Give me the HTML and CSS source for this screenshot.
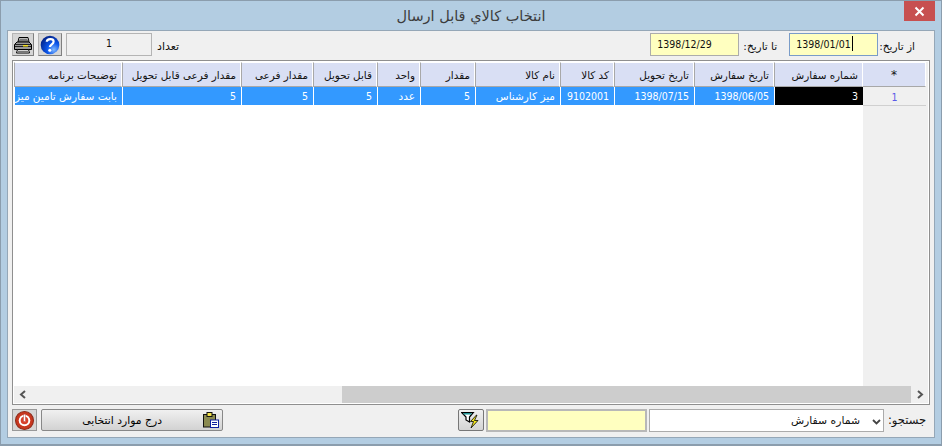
FILE: index.html
```html
<!DOCTYPE html>
<html lang="fa">
<head>
<meta charset="utf-8">
<title>انتخاب كالاي قابل ارسال</title>
<link rel="stylesheet" href="styles.css">
</head>
<body>
<div class="window">
  <header class="titlebar">
    <h1 class="title">انتخاب كالاي قابل ارسال</h1>
    <button class="close" aria-label="close"><svg width="11" height="11" viewBox="0 0 11 11"><path d="M1.500 1.500l8 8M9.500 1.500l-8 8" stroke="#fff" stroke-width="2" fill="none"/></svg></button>
  </header>
  <main class="client">
    <div class="toolbar">
      <div class="group">
        <label class="lbl">از تاریخ:</label>
        <div class="date focus">1398/01/01<span class="caret"></span></div>
        <label class="lbl to">تا تاریخ:</label>
        <div class="date second">1398/12/29</div>
      </div>
      <div class="group left">
        <span class="lbl count-lbl">تعداد</span>
        <div class="count">1</div>
        <button class="icon-btn help"><svg width="20" height="20" viewBox="0 0 20 20"><defs><radialGradient id="g" cx="70%" cy="75%" r="80%"><stop offset="0" stop-color="#7fb8ff"/><stop offset=".45" stop-color="#0b55ea"/><stop offset="1" stop-color="#04248a"/></radialGradient></defs><circle cx="10" cy="10" r="9.300" fill="url(#g)"/><path d="M6.800 6.800c.2-3.200 6.600-3.600 6.800-.3.100 2.700-3.600 2.900-3.700 5.500" fill="none" stroke="#fff" stroke-width="2.200"/><circle cx="9.800" cy="15.200" r="1.500" fill="#fff"/></svg></button>
        <button class="icon-btn printer"><svg width="18" height="18" viewBox="0 0 18 18"><path d="M5 1.500h9l1 4.500H4z" fill="#eee" stroke="#000"/><path d="M5.500 3.200h8M5 4.800h9.500" stroke="#444"/><path d="M.5 8.500l2.500-2.500h12l2.500 2.500v5H.5z" fill="#999" stroke="#000"/><path d="M1 8.500h16M1 10.500h16" stroke="#222"/><rect x="9" y="9" width="5" height="1.500" fill="#f4e021"/><path d="M3.500 13.500h11l1 3.500H2.500z" fill="#f4f4f4" stroke="#000"/><path d="M4 15.300h10" stroke="#555"/></svg></button>
      </div>
    </div>

    <section class="grid">
      <div class="grid-body">
        <div class="rownum-col">
          <div class="hcell star">*</div>
          <div class="numcell">1</div>
        </div>
        <div class="cols">
          <div class="hrow">
            <div class="hcell c1">شماره سفارش</div>
            <div class="hcell c2">تاریخ سفارش</div>
            <div class="hcell c3">تاریخ تحویل</div>
            <div class="hcell c4">کد کالا</div>
            <div class="hcell c5">نام کالا</div>
            <div class="hcell c6">مقدار</div>
            <div class="hcell c7">واحد</div>
            <div class="hcell c8">قابل تحویل</div>
            <div class="hcell c9">مقدار فرعی</div>
            <div class="hcell c10">مقدار فرعی قابل تحویل</div>
            <div class="hcell c11">توضیحات برنامه</div>
          </div>
          <div class="drow">
            <div class="dcell c1 current">3</div>
            <div class="dcell c2">1398/06/05</div>
            <div class="dcell c3">1398/07/15</div>
            <div class="dcell c4">9102001</div>
            <div class="dcell c5 ar">میز کارشناس</div>
            <div class="dcell c6">5</div>
            <div class="dcell c7 ar">عدد</div>
            <div class="dcell c8">5</div>
            <div class="dcell c9">5</div>
            <div class="dcell c10">5</div>
            <div class="dcell c11 ar">بابت سفارش تامین میز</div>
          </div>
        </div>
      </div>
      <div class="scrollbar">
        <span class="arrow"><svg width="8" height="9" viewBox="0 0 8 9"><path d="M6 1L2 4.500 6 8" fill="none" stroke="#555" stroke-width="2"/></svg></span>
        <div class="track"></div>
        <div class="thumb"></div>
        <span class="arrow"><svg width="8" height="9" viewBox="0 0 8 9"><path d="M2 1l4 3.500L2 8" fill="none" stroke="#555" stroke-width="2"/></svg></span>
      </div>
    </section>

    <div class="footer">
      <div class="group">
        <label class="lbl search-lbl">جستجو:</label>
        <div class="select"><svg class="chev" width="9" height="6" viewBox="0 0 9 6"><path d="M1 1l3.500 3.500L8 1" fill="none" stroke="#444" stroke-width="1.800"/></svg><span class="select-text">شماره سفارش</span></div>
        <div class="search"></div>
        <button class="filter"><svg width="20" height="18" viewBox="0 0 20 18"><path d="M.7 1.500h11.600L8.500 6v5L5 9V6z" fill="#fff" stroke="#000" stroke-width="1.200"/><path d="M2.500 2.800h8" stroke="#0a8a8a" stroke-width="1.400"/><path d="M15.500 4L9.500 10.500h3L10 17l7-7.500h-3.500l2.500-5.500z" fill="#f7ea1e" stroke="#000" stroke-width=".8"/></svg></button>
      </div>
      <div class="group left">
        <button class="insert">
          <svg class="clip" width="16" height="16" viewBox="0 0 16 16"><rect x=".5" y="2.500" width="12" height="12.500" fill="#8a8a50" stroke="#111"/><rect x="4" y=".5" width="5" height="4" fill="#f2e24a" stroke="#111"/><rect x="7.500" y="8" width="8" height="7.500" fill="#fff" stroke="#1020a0"/><path d="M9 10.500h5M9 12.500h5" stroke="#1020a0"/></svg>
          <span class="insert-text">درج موارد انتخابی</span>
        </button>
        <button class="power"><svg width="19" height="19" viewBox="0 0 18 18"><circle cx="9" cy="9" r="8.500" fill="#c8371f" stroke="#8d2a1a"/><circle cx="9" cy="9" r="5.500" fill="#fff"/><circle cx="9" cy="9" r="3.600" fill="#d8402a"/><rect x="8" y="3" width="2" height="7" fill="#fff" stroke="#a33" stroke-width=".4"/></svg></button>
      </div>
    </div>
  </main>
</div>
</body>
</html>
```
FILE: styles.css
```css
* { box-sizing: border-box; }
html, body { margin: 0; padding: 0; }
body { width: 942px; height: 446px; overflow: hidden; font-family: "DejaVu Sans", sans-serif; font-size: 10px; color: #111; }
button { padding: 0; font: inherit; }

.window { width: 942px; height: 446px; background: #b3cde2; border: 1px solid #8b9dad; border-bottom-width: 2px; display: flex; flex-direction: column; }
.titlebar { height: 29px; flex: none; display: flex; justify-content: center; position: relative; }
.title { margin: 5px 0 0; font-size: 14.500px; font-weight: normal; color: #3c3c3c; line-height: 20px; direction: rtl; }
.close { position: absolute; right: 6px; top: 0; width: 31px; height: 20px; background: #c75050; border: 0; display: flex; align-items: center; justify-content: center; }

.client { flex: 1; margin: 0 6px 6px; background: #f0f0f0; border: 1px solid #95a7b7; display: flex; flex-direction: column; }
.toolbar { height: 29px; flex: none; display: flex; flex-direction: row-reverse; justify-content: space-between; }
.group { display: flex; direction: rtl; align-items: flex-start; }
.lbl { font-size: 10.500px; white-space: nowrap; }

.toolbar .group:first-child { margin: 2px 19px 0 0; }
.toolbar .lbl { line-height: 24px; margin-top: 1px; }
.date { width: 89px; height: 23px; margin-right: 1px; background: #ffffc0; border: 1px solid #acacac; font-family: "DejaVu Sans Condensed", "DejaVu Sans", sans-serif; font-size: 10.500px; line-height: 20px; padding-left: 6px; direction: ltr; text-align: left; display: flex; }
.date.second { margin-right: 4px; }
.date.focus { border-color: #7a9cc8; }
.caret { width: 1px; height: 15px; margin: 2px 0 0 1px; background: #000; }
.lbl.to { margin-right: 12px; }

.toolbar .group.left { margin: 2px 0 0 4px; }
.toolbar .count-lbl { margin-top: 2px; font-size: 11px; }
.count { width: 86px; height: 23px; margin: 0 5px 0 4px; border: 1px solid #b4b4b4; background: #f0f0f0; font-family: "DejaVu Sans Condensed", "DejaVu Sans", sans-serif; font-size: 10.500px; line-height: 19px; text-align: center; }
.icon-btn { height: 23px; background: #d6d6d6; border: 1px solid; border-color: #b5b5b5 #808080 #808080 #b5b5b5; display: flex; align-items: center; justify-content: center; }
.help { width: 24px; margin-left: 4px; }
.printer { width: 22px; }

.grid { flex: 1; min-height: 0; margin: 0 4px 0 4px; border: 1px solid #8f8f8f; padding: 1px; background: #fff; display: flex; flex-direction: column; }
.grid-body { flex: 1; min-height: 0; display: flex; flex-direction: row-reverse; justify-content: flex-start; overflow: hidden; }
.rownum-col { width: 65px; flex: none; background: #f0f0f0; }
.cols { flex: 1; min-width: 0; overflow: hidden; direction: rtl; }
.hrow, .drow { display: flex; }
.hcell { height: 25px; background: #d9dff4; border-left: 1px solid #a8a8a8; border-bottom: 1px solid #a8a8a8; border-right: 1px solid #fff; border-top: 1px solid #fff; padding: 5px 4px 0 2px; font-size: 10.400px; text-align: right; white-space: nowrap; direction: rtl; overflow: hidden; line-height: 15px; flex: none; }
.star { width: 63px; text-align: center; font-size: 12px; border-left: 0; padding: 5px 0 0; }
.numcell { width: 63px; height: 19px; border-bottom: 1px solid #d0d0d0; text-align: center; line-height: 20px; color: #5a5ae8; font-family: "DejaVu Sans Condensed", "DejaVu Sans", sans-serif; font-size: 10.500px; }
.dcell { height: 19px; background: #3399ff; color: #fff; border-left: 1px solid #fff; padding: 0 5px 0 0; font-family: "DejaVu Sans Condensed", "DejaVu Sans", sans-serif; font-size: 10.500px; line-height: 18px; white-space: nowrap; overflow: hidden; text-align: right; direction: rtl; flex: none; border-bottom: 1px solid #fff; }
.dcell.ar { font-family: "DejaVu Sans", sans-serif; }
.dcell.current { background: #000; }
.c1 { width: 89px; }
.c2 { width: 80px; }
.c3 { width: 80px; }
.c4 { width: 54px; }
.c5 { width: 85px; }
.c6 { width: 55px; }
.c7 { width: 43px; }
.c8 { width: 64px; }
.c9 { width: 72px; }
.c10 { width: 119px; }
.c11 { width: 108px; }

.scrollbar { height: 17px; flex: none; display: flex; background: #f0f0f0; }
.arrow { width: 17px; flex: none; display: flex; align-items: center; justify-content: center; }
.track { width: 311px; background: #f0f0f0; }
.thumb { flex: 1; background: #cdcdcd; }

.footer { height: 32px; flex: none; display: flex; flex-direction: row-reverse; justify-content: space-between; }
.footer .group { margin-top: 4px; }
.footer .group:first-child { margin-right: 8px; }
.search-lbl { font-size: 11.500px; line-height: 22px; width: 38px; }
.select { width: 235px; height: 23px; margin-right: 4px; background: #fff; border: 1px solid #ababab; display: flex; align-items: center; }
.chev { margin: 2px 2px 0 6px; }
.select-text { margin-right: 6px; font-size: 10.800px; }
.search { width: 161px; height: 23px; margin-right: 2px; background: #ffffc0; border: 2px solid #b8b8b8; }
.filter { width: 26px; height: 22px; margin-right: 2px; background: linear-gradient(#f0f0f0, #d4d4d4); border: 1px solid #777; border-radius: 2px; display: flex; align-items: center; justify-content: center; }
.footer .group.left { margin-left: 4px; }
.insert { width: 182px; height: 22px; background: linear-gradient(#f0f0f0, #d2d2d2); border: 1px solid #888; border-radius: 2px; display: flex; direction: rtl; align-items: center; }
.clip { margin-right: 3px; }
.insert-text { margin-right: 41px; font-size: 10.800px; }
.power { width: 25px; height: 22px; margin-right: 4px; background: #d6d6d6; border: 1px solid #999; display: flex; align-items: center; justify-content: center; }
```
